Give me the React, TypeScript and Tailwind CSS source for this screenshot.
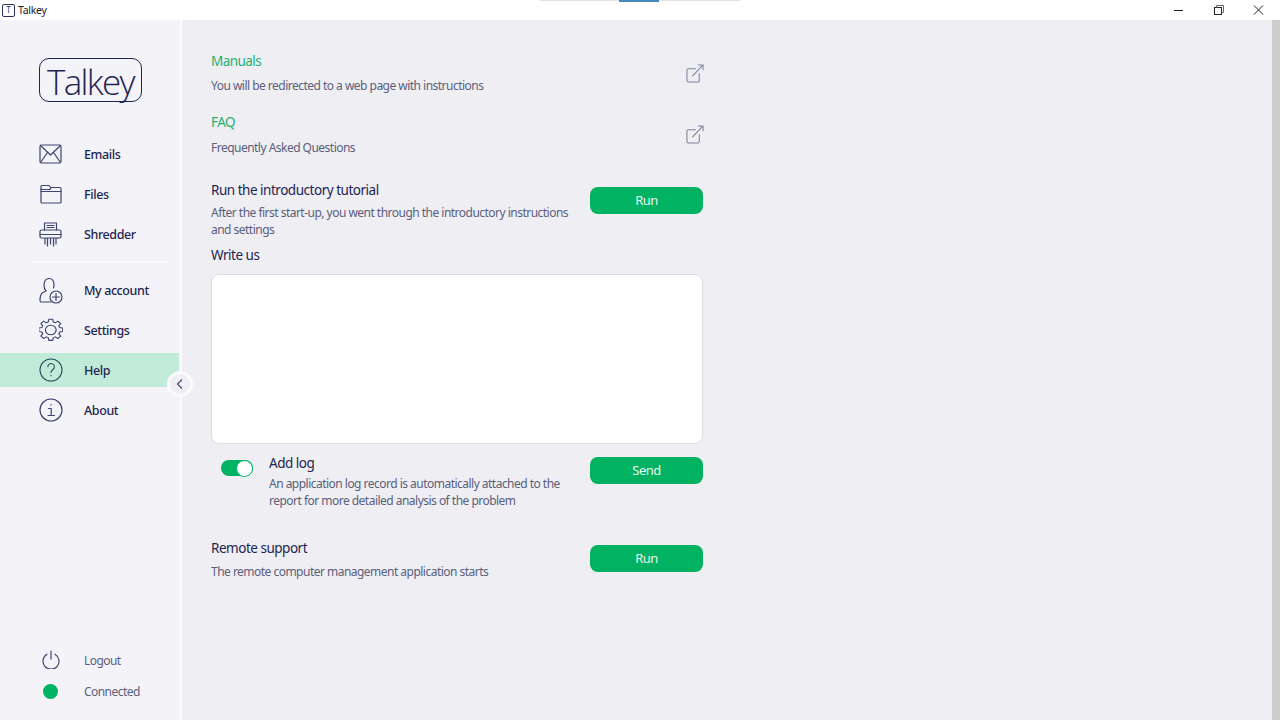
import React from "react";

const S = { fill: "none", stroke: "#3f4470", strokeWidth: 1.2, strokeLinecap: "round" as const, strokeLinejoin: "round" as const };

function Mail() {
  return (
    <svg width="24" height="22" viewBox="0 0 24 22" {...S}>
      <rect x="1" y="2" width="21" height="18" rx="1.5" />
      <path d="M1.500 2.500 11.500 12 21.500 2.500M1.500 19.500 8.500 9.500M21.500 19.500 14.500 9.500" />
    </svg>
  );
}
function Folder() {
  return (
    <svg width="24" height="22" viewBox="0 0 24 22" {...S}>
      <path d="M2 6V3.500a1 1 0 0 1 1-1h7l1.500 2H21a1 1 0 0 1 1 1V19a1 1 0 0 1-1 1H3a1 1 0 0 1-1-1z" />
      <path d="M2 6.500h9l1-2M2 8.500h20" />
    </svg>
  );
}
function Shredder() {
  return (
    <svg width="24" height="26" viewBox="0 0 24 26" {...S}>
      <path d="M5.500 9V2h12v7M8 4.500h7M8 6.500h7" />
      <path d="M4 17H2.500A1.500 1.500 0 0 1 1 15.500V10.500A1.500 1.500 0 0 1 2.500 9h18a1.500 1.500 0 0 1 1.500 1.500v5a1.500 1.500 0 0 1-1.500 1.500H19" />
      <path d="M1 13.500h21M5 17h14M6 17v6M8.500 17v8M11.500 17v6M14.500 17v8M17 17v6" />
    </svg>
  );
}
function Account() {
  return (
    <svg width="24" height="27" viewBox="0 0 24 27" {...S}>
      <path d="M12 25H2.500A1.500 1.500 0 0 1 1 23.500c0-4 .5-6.500 3-8l3-1.500c-1.500-1.500-2-3.500-2-6C5 4 7 1.500 10 1.500S15 4 15 8c0 1-.1 2-.5 3" />
      <circle cx="17" cy="20" r="6" />
      <path d="M17 16.500v7M13.500 20h7" />
    </svg>
  );
}
function Gear() {
  const d =
    "M10 1.500h4l.6 3.200 2 .9 2.700-1.900 2.800 2.800-1.900 2.700.9 2 3.200.6v4l-3.200.6-.9 2 1.900 2.700-2.800 2.800-2.700-1.900-2 .9-.6 3.200h-4l-.6-3.200-2-.9-2.700 1.900-2.800-2.800 1.900-2.700-.9-2-3.200-.6v-4l3.200-.6.9-2-1.900-2.700 2.800-2.800 2.700 1.900 2-.9z";
  return (
    <svg width="24" height="24" viewBox="0 0 24.500 28" {...S} preserveAspectRatio="none">
      <path d={d} />
      <circle cx="12" cy="14" r="5.500" />
    </svg>
  );
}
function Help() {
  return (
    <svg width="24" height="24" viewBox="0 0 24 24" fill="none" stroke="#24505c" strokeWidth="1.100" strokeLinecap="round">
      <circle cx="12" cy="12" r="11" />
      <path d="M8.800 8.800a3.300 3.300 0 1 1 5.200 2.700c-1.300.9-2 1.500-2 3" />
      <path d="M12 17.300v.4" />
    </svg>
  );
}
function Info() {
  return (
    <svg width="24" height="24" viewBox="0 0 24 24" {...S}>
      <circle cx="12" cy="12" r="11" />
      <path d="M9.500 10.500H12.200V17.500M9 17.500h6.500M12 6.500v.6" />
    </svg>
  );
}
function Power() {
  return (
    <svg width="18" height="19" viewBox="0 0 18 19" {...S}>
      <path d="M5 4.200a8 8 0 1 0 8 0M9 1v8" />
    </svg>
  );
}
function External() {
  return (
    <svg width="18" height="19" viewBox="0 0 19 20" fill="none" stroke="#7d8199" strokeWidth="1.100" strokeLinecap="round">
      <path d="M10 5H2.500A1.500 1.500 0 0 0 1 6.500v11A1.500 1.500 0 0 0 2.500 19h10a1.500 1.500 0 0 0 1.500-1.500V10" />
      <path d="M7 12.500 18 1M13 1h5v5" />
    </svg>
  );
}

function NavItem({ icon, label, active }: { icon: React.ReactNode; label: string; active?: boolean }) {
  return (
    <div className={`flex h-10 items-center pl-[39px] ${active ? "relative" : ""}`}>
      {active && <div className="absolute left-0 top-[3px] h-[34px] w-[179px] bg-[#c1ebd8]" />}
      <span className="relative flex w-[45px] items-center">{icon}</span>
      <span className="relative top-[1px] text-[12.500px] font-medium tracking-[-0.4px] text-[#1f2552]">{label}</span>
    </div>
  );
}

function Button({ children }: { children: React.ReactNode }) {
  return (
    <div className="flex h-[27px] w-[113px] shrink-0 items-center justify-center rounded-lg bg-[#00b262] text-[13px] text-[#e8f8f0]">
      {children}
    </div>
  );
}

export default function App() {
  return (
    <div className="flex h-[720px] w-[1280px] flex-col overflow-hidden bg-white font-['Noto_Sans',sans-serif]">
      <div className="relative flex h-5 shrink-0 items-center bg-white pl-[2px] pr-[1px]">
        <span className="flex h-[13px] w-[13px] items-center justify-center rounded-[2px] border border-[#2a3060] text-[8px] leading-none text-[#2a3060]">T</span>
        <span className="relative top-[1px] ml-[3px] text-[10.500px] tracking-[-0.3px] text-[#222]">Talkey</span>
        <div className="absolute left-[540px] top-0 flex h-px w-[200px] bg-[#e2e2e2]">
          <div className="ml-[79px] h-[2px] w-[40px] bg-[#4a88c0]" />
        </div>
        <div className="ml-auto flex items-center">
          <svg width="40" height="16" viewBox="0 0 40 16" fill="none" stroke="#222" strokeWidth="1"><path d="M15 8.500h9" /></svg>
          <svg width="40" height="16" viewBox="0 0 40 16" fill="none" stroke="#222" strokeWidth="1"><rect x="15.500" y="5.500" width="7" height="7" /><path d="M17.500 5.500v-2h7v7h-2" stroke="#666" /></svg>
          <svg width="40" height="16" viewBox="0 0 40 16" fill="none" stroke="#222" strokeWidth="1"><path d="M15 3.500l9 9M24 3.500l-9 9" /></svg>
        </div>
      </div>

      <div className="flex min-h-0 flex-1">
        <aside className="relative flex w-[180px] shrink-0 flex-col bg-[#f3f3f8]">
          <div className="relative ml-[39px] mt-[38px] flex h-[44px] w-[103px] items-center justify-center overflow-visible rounded-[10px] border-[1.500px] border-[#1f2552] font-['Open_Sans',sans-serif] text-[35px] font-light leading-none tracking-[-1.7px] text-[#1f2552]">
            <span className="relative top-[1px]">Talkey</span>
          </div>
          <div className="mt-[32px]">
            <NavItem icon={<Mail />} label="Emails" />
            <NavItem icon={<Folder />} label="Files" />
            <NavItem icon={<Shredder />} label="Shredder" />
          </div>
          <div className="ml-[33px] mr-[13px] mt-[7px] mb-[7px] h-[2px] bg-[#fafafc]" />
          <NavItem icon={<Account />} label="My account" />
          <NavItem icon={<Gear />} label="Settings" />
          <NavItem icon={<Help />} label="Help" active />
          <NavItem icon={<Info />} label="About" />
          <div className="mt-auto mb-[13px] text-[12px] tracking-[-0.55px] text-[#5b5f7c]">
            <div className="flex h-[31px] items-center pl-[42px]">
              <span className="relative -top-[1px] flex w-[42px]"><Power /></span>
              <span>Logout</span>
            </div>
            <div className="flex h-[31px] items-center pl-[43px]">
              <span className="mr-[26px] h-[15px] w-[15px] rounded-full bg-[#00b262]" />
              <span>Connected</span>
            </div>
          </div>
          <div className="absolute left-[167px] top-[351px] z-10 flex h-[26px] w-[26px] items-center justify-center rounded-full border-[3px] border-[#fafafc] bg-[#eeeef3]">
            <svg width="8" height="12" viewBox="0 0 8 12" fill="none" stroke="#3f4470" strokeWidth="1.100"><path d="M6 1.500 1.500 6 6 10.500" /></svg>
          </div>
        </aside>

        <div className="w-[2px] shrink-0 bg-[#fafafc]" />

        <main className="min-w-0 flex-1 bg-[#eeeef3] pl-[29px] pt-[30px]">
          <div className="w-[492px] text-[12px] tracking-[-0.52px] text-[#5b5f7c]">
            <div className="flex h-[61px] items-start justify-between">
              <div>
                <div className="text-[13.500px] leading-[22px] tracking-[-0.55px] text-[#1fb06f]">Manuals</div>
                <div className="mt-[3px] leading-[22px]">You will be redirected to a web page with instructions</div>
              </div>
              <span className="mt-[14px] -mr-[1px]"><External /></span>
            </div>
            <div className="flex h-[62px] items-start justify-between">
              <div>
                <div className="text-[13.500px] leading-[22px] tracking-[-0.55px] text-[#1fb06f]">FAQ</div>
                <div className="mt-[4px] leading-[22px]">Frequently Asked Questions</div>
              </div>
              <span className="mt-[14px] -mr-[1px]"><External /></span>
            </div>
            <div className="mt-[6px] flex h-[61px] justify-between">
              <div className="w-[365px]">
                <div className="text-[13.500px] leading-[22px] tracking-[-0.48px] text-[#1f2552]">Run the introductory tutorial</div>
                <div className="mt-[3px] leading-[17px]">After the first start-up, you went through the introductory instructions and settings</div>
              </div>
              <div className="mt-[8px]"><Button>Run</Button></div>
            </div>
            <div className="mt-[4px] text-[13.500px] leading-[22px] tracking-[-0.48px] text-[#1f2552]">Write us</div>
            <div className="mt-[8px] h-[170px] rounded-lg border border-[#dcdce3] bg-white" />
            <div className="mt-[8px] flex justify-between">
              <div className="flex">
                <div className="ml-[10px] mr-[11px] mt-[8px] flex h-[16px] w-[32px] shrink-0 items-center justify-end rounded-full bg-[#00b262]">
                  <span className="h-[17px] w-[17px] rounded-full border border-[#00b262] bg-white" />
                </div>
                <div className="ml-[5px] w-[305px]">
                  <div className="text-[13.500px] leading-[22px] tracking-[-0.48px] text-[#1f2552]">Add log</div>
                  <div className="mt-[1px] leading-[17px]">An application log record is automatically attached to the report for more detailed analysis of the problem</div>
                </div>
              </div>
              <div className="mt-[5px]"><Button>Send</Button></div>
            </div>
            <div className="mt-[28px] flex items-start justify-between">
              <div>
                <div className="text-[13.500px] leading-[22px] tracking-[-0.48px] text-[#1f2552]">Remote support</div>
                <div className="mt-[2px] leading-[22px]">The remote computer management application starts</div>
              </div>
              <div className="mt-[8px]"><Button>Run</Button></div>
            </div>
          </div>
        </main>
        <div className="w-2 shrink-0 bg-[#cdcdcd]" />
      </div>
    </div>
  );
}
